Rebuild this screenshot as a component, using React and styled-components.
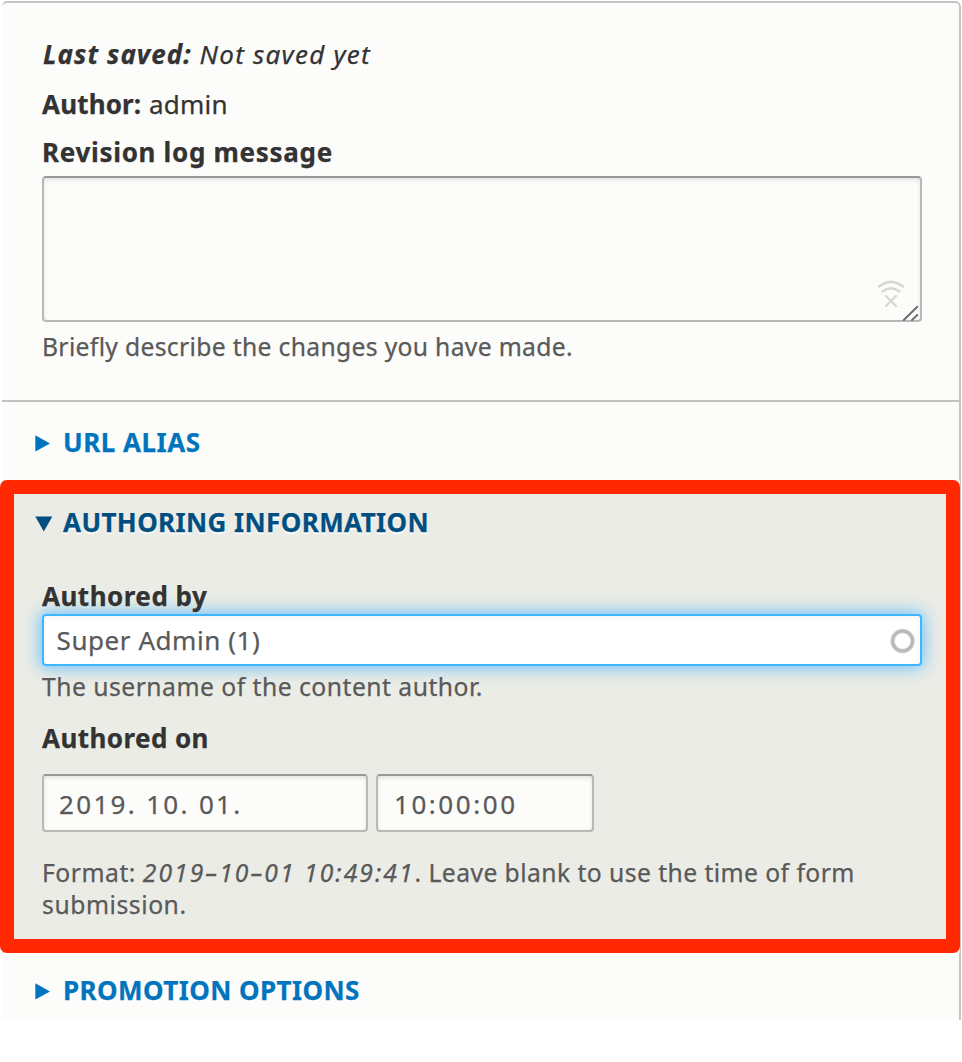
import React from "react";
import styled, { createGlobalStyle } from "styled-components";

const GlobalStyle = createGlobalStyle`
  *, *::before, *::after { box-sizing: border-box; }
  body {
    margin: 0;
    background: #fff;
    color: #333;
    font: 26px/32px "Noto Sans", "Open Sans", sans-serif;
    -webkit-text-stroke: 0.25px;
  }
`;

const Panel = styled.main`
  width: 959px;
  height: 1019px;
  margin: 1px 0 0 2px;
  background: #fcfcfa;
  border: solid #c4c4c2;
  border-width: 2px 2px 0 0;
  border-radius: 5px 6px 0 0;
`;

const MetaSection = styled.section`
  height: 399px;
  padding: 35px 38px 0 40px;
  border-bottom: 2px solid #c2c2c0;
`;

const MetaLine = styled.p`
  margin: 0 0 ${(p) => p.$gap}px;
  height: 32px;
  font-style: ${(p) => (p.$italic ? "italic" : "normal")};
`;

const Text = styled.span`
  letter-spacing: ${(p) => p.$track || 0}px;
  margin-left: ${(p) => p.$shift || 0}px;
`;

const Strong = styled(Text)`
  font-weight: 700;
`;

const Label = styled.div`
  height: 32px;
  margin-top: ${(p) => p.$top || 0}px;
  font-weight: 700;
  letter-spacing: ${(p) => p.$track}px;
`;

const fieldFrame = `
  border: 2px solid #b8b8b6;
  border-top-color: #999;
  border-radius: 4px;
  background: #fcfcfa;
  box-shadow: inset 0 2px 4px rgba(0, 0, 0, 0.1);
  color: #595959;
`;

const LogArea = styled.div`
  ${fieldFrame}
  display: flex;
  align-items: flex-end;
  justify-content: flex-end;
  width: 880px;
  height: 146px;
  margin-top: 8px;
`;

const OfflineIcon = styled.svg`
  width: 30px;
  height: 32px;
  margin: 0 -4px 9px 0;
`;

const ResizeGrip = styled.svg`
  width: 18px;
  height: 17px;
  overflow: visible;
`;

const Description = styled.p`
  margin: ${(p) => p.$top}px 0 0;
  color: #595959;
  font-size: 24.7px;
  line-height: 32px;
  letter-spacing: ${(p) => p.$track}px;
`;

const Summary = styled.div`
  display: flex;
  align-items: center;
  height: 32px;
  color: ${(p) => (p.$open ? "#004f80" : "#0074bd")};
  font-weight: 700;
  letter-spacing: ${(p) => p.$track}px;
  text-shadow: 0 2px 0 #fff;
`;

const Arrow = styled.svg`
  width: 18px;
  height: 20px;
  margin-right: 10px;
  fill: currentColor;
`;

const Collapsed = styled.section`
  height: ${(p) => p.$height}px;
  padding: ${(p) => p.$top}px 0 0 33px;
`;

const Expanded = styled.section`
  position: relative;
  width: 958px;
  height: 473px;
  padding: 26px 38px 0 40px;
  background: #ebece6;
`;

const ExpandedSummary = styled(Summary)`
  margin: 0 0 42px -7px;
`;

const Highlight = styled.div`
  position: absolute;
  inset: 0 0 0 -2px;
  border: 14px solid #ff2800;
  border-radius: 7px;
  pointer-events: none;
`;

const AuthorField = styled.div`
  display: flex;
  align-items: center;
  justify-content: space-between;
  width: 880px;
  height: 52px;
  margin-top: 2px;
  padding: 0 4px 0 12px;
  border: 2px solid #40b6ff;
  border-radius: 4px;
  background: #fff;
  box-shadow: 0 0 16px 2px rgba(64, 182, 255, 0.75), inset 0 2px 4px rgba(0, 0, 0, 0.04);
  color: #595959;
`;

const Throbber = styled.svg`
  width: 26px;
  height: 26px;
  margin-top: 1px;
`;

const DateRow = styled.div`
  display: flex;
  gap: 8px;
  margin-top: 20px;
`;

const DateField = styled.div`
  ${fieldFrame}
  display: flex;
  align-items: center;
  width: ${(p) => p.$width}px;
  height: 58px;
  padding: 1px 0 0 ${(p) => p.$pad}px;
`;

const FormatDate = styled.em`
  letter-spacing: 2.03px;
`;

function ClosedArrow() {
  return (
    <Arrow viewBox="0 0 18 20">
      <path d="M0.3 3.2L15 11.4L0.3 19.6Z" />
    </Arrow>
  );
}

function OpenArrow() {
  return (
    <Arrow viewBox="0 0 18 20">
      <path d="M0.3 4.4H17.3L8.8 19.4Z" />
    </Arrow>
  );
}

export default function App() {
  return (
    <>
      <GlobalStyle />
      <Panel>
        <MetaSection>
          <MetaLine $italic $gap={18}>
            <Strong $track={1.07} $shift={1}>Last saved:</Strong>{" "}
            <Text $track={1.25} $shift={1}>Not saved yet</Text>
          </MetaLine>
          <MetaLine $gap={16}>
            <Strong $track={0.15}>Author:</Strong>{" "}
            <Text $track={0.2} $shift={1}>admin</Text>
          </MetaLine>
          <Label $track={0.69}>Revision log message</Label>
          <LogArea>
            <OfflineIcon viewBox="0 0 30 32" fill="none" stroke="#d6d6d4" strokeWidth="2.3" strokeLinecap="round">
              <path d="M3 7.5Q15 -1.5 27 7.5M6.5 12.5Q15 6 23.5 12.5M10 17L20 27M20 17L10 27" />
            </OfflineIcon>
            <ResizeGrip viewBox="0 0 18 17" fill="none" stroke="#6b6b6b" strokeWidth="1.9" strokeLinecap="round">
              <path d="M1.8 17L15.3 3.8M10 17L15.3 12" />
            </ResizeGrip>
          </LogArea>
          <Description $top={9} $track={0.32}>Briefly describe the changes you have made.</Description>
        </MetaSection>
        <Collapsed $top={24} $height={78}>
          <Summary $track={0.5}>
            <ClosedArrow />
            URL ALIAS
          </Summary>
        </Collapsed>
        <Expanded>
          <ExpandedSummary $open $track={0.4}>
            <OpenArrow />
            AUTHORING INFORMATION
          </ExpandedSummary>
          <Label $track={0.49}>Authored by</Label>
          <AuthorField>
            <Text $track={0.55} $shift={0.6}>Super Admin (1)</Text>
            <Throbber viewBox="0 0 26 26" fill="none">
              <circle cx="12.6" cy="13" r="10" stroke="#d9d9d9" strokeWidth="4.6" />
              <circle cx="12.6" cy="13" r="10" stroke="#b8b8b8" strokeWidth="2.8" />
            </Throbber>
          </AuthorField>
          <Description $top={5} $track={0.48}>The username of the content author.</Description>
          <Label $top={19} $track={0.42}>Authored on</Label>
          <DateRow>
            <DateField $width={326} $pad={15}>
              <Text $track={2.32}>2019. 10. 01.</Text>
            </DateField>
            <DateField $width={218} $pad={16}>
              <Text $track={2.55}>10:00:00</Text>
            </DateField>
          </DateRow>
          <Description $top={25} $track={0.43}>
            <Text $track={0.5}>Format:</Text>{" "}
            <FormatDate>2019–10–01 10:49:41</FormatDate>
            . Leave blank to use the time of form
            <br />
            <Text $track={0.55}>submission.</Text>
          </Description>
          <Highlight />
        </Expanded>
        <Collapsed $top={21} $height={64}>
          <Summary $track={0.43}>
            <ClosedArrow />
            PROMOTION OPTIONS
          </Summary>
        </Collapsed>
      </Panel>
    </>
  );
}
